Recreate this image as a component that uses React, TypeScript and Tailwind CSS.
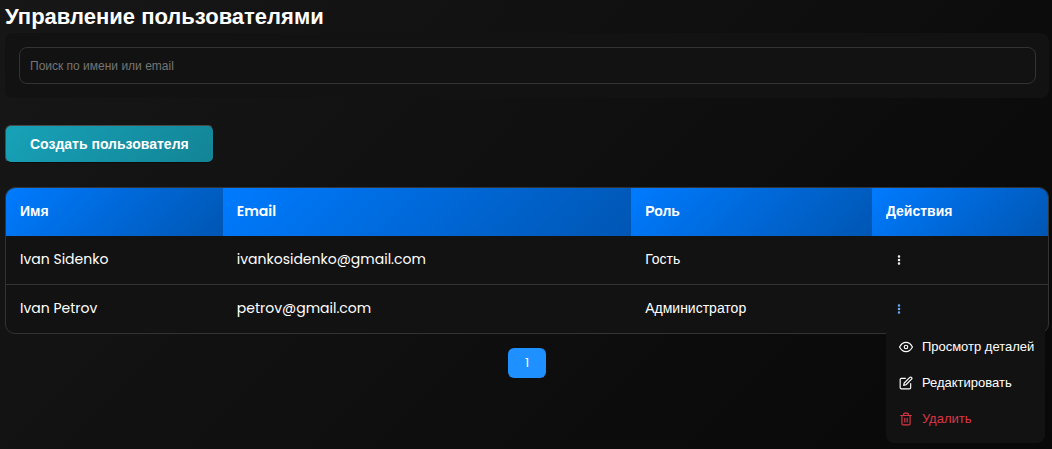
import React from 'react';
import { FiEdit, FiEye, FiMoreVertical, FiTrash2 } from 'react-icons/fi';

type User = { name: string; email: string; role: string };

const users: User[] = [
  { name: 'Ivan Sidenko', email: 'ivankosidenko@gmail.com', role: 'Гость' },
  { name: 'Ivan Petrov', email: 'petrov@gmail.com', role: 'Администратор' },
];

const columns = [
  { label: 'Имя', style: 'w-[20.8%] rounded-tl-[9px]' },
  { label: 'Email', style: 'w-[39.2%]' },
  { label: 'Роль', style: 'w-[23.1%]' },
  { label: 'Действия', style: 'w-[16.9%] rounded-tr-[9px]' },
];

function ActionMenu() {
  const item = 'flex h-9 w-full items-center gap-[9px] pr-[11px] pl-[13px] text-left';
  return (
    <div
      role="menu"
      className="absolute top-full left-0 z-10 mt-0.5 rounded-lg bg-[#121212] py-1.5 font-['Liberation_Sans',Arial,sans-serif] text-[13px] whitespace-nowrap"
    >
      <button role="menuitem" className={item}>
        <FiEye size={14} />
        Просмотр деталей
      </button>
      <button role="menuitem" className={item}>
        <FiEdit size={14} />
        Редактировать
      </button>
      <button role="menuitem" className={`${item} text-[#dc3545]`}>
        <FiTrash2 size={14} />
        Удалить
      </button>
    </div>
  );
}

function UserRow({ user, open }: { user: User; open: boolean }) {
  return (
    <tr className="h-12 not-last:h-[49px] [&:not(:last-child)>td]:border-b [&>td]:border-[#333]">
      <td className="px-3.5 pb-0.5">{user.name}</td>
      <td className="px-3.5 pb-0.5">{user.email}</td>
      <td className="px-3.5 pb-0.5">{user.role}</td>
      <td className="px-3.5">
        <div className="relative w-fit">
          <button
            aria-label={`Действия: ${user.name}`}
            aria-expanded={open}
            className="flex h-6 w-[26px] items-center justify-center aria-expanded:text-[#6cb2ff]"
          >
            <FiMoreVertical size={12} strokeWidth={3} />
          </button>
          {open && <ActionMenu />}
        </div>
      </td>
    </tr>
  );
}

export default function App() {
  return (
    <main className="min-h-screen bg-linear-135 from-[#171717] to-[#080808] pr-[3px] pl-[5px] font-['Poppins','Liberation_Sans',Arial,sans-serif] text-white">
      <h1 className="font-['Liberation_Sans',Arial,sans-serif] text-[22px] leading-[33px] font-bold">
        Управление пользователями
      </h1>
      <div className="rounded-lg bg-[#121212] p-3.5 pr-[13px]">
        <input
          type="search"
          aria-label="Поиск по имени или email"
          placeholder="Поиск по имени или email"
          className="block h-[37px] w-full rounded-lg border border-[#333] bg-[#121212] px-2.5 font-['Liberation_Sans',Arial,sans-serif] text-xs outline-none placeholder:text-[#757575]"
        />
      </div>
      <button className="mt-[27px] block h-[38px] rounded-md border border-t-[#4a4a4a] border-r-[#0c0c0c] border-b-[#0c0c0c] border-l-[#4a4a4a] bg-linear-135 from-[#17a2b8] to-[#138496] px-6 font-['Liberation_Sans',Arial,sans-serif] text-sm font-bold">
        Создать пользователя
      </button>
      <div className="mt-6 rounded-[10px] border border-[#333] bg-[#121212]">
        <table className="w-full table-fixed border-separate border-spacing-0 text-left text-sm">
          <thead>
            <tr>
              {columns.map((column) => (
                <th
                  key={column.label}
                  scope="col"
                  className={`h-12 bg-linear-135 from-[#007bff] to-[#0056b3] px-3.5 pb-0.5 font-semibold ${column.style}`}
                >
                  {column.label}
                </th>
              ))}
            </tr>
          </thead>
          <tbody>
            {users.map((user, index) => (
              <UserRow key={user.email} user={user} open={index === 1} />
            ))}
          </tbody>
        </table>
      </div>
      <nav aria-label="Страницы" className="mt-3.5 flex justify-center">
        <button aria-current="page" className="h-[30px] w-[38px] rounded-md bg-[#1e90ff] text-[13px]">
          1
        </button>
      </nav>
    </main>
  );
}
